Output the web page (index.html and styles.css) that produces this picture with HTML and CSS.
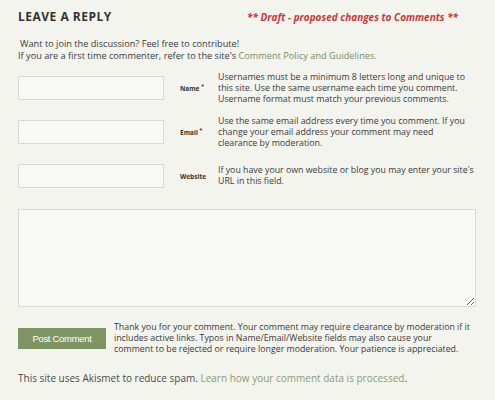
FILE: index.html
```html
<!DOCTYPE html>
<html lang="en">
<head>
    <meta charset="UTF-8">
    <title>Leave a Reply</title>
    <link rel="stylesheet" href="styles.css">
</head>
<body>
    <div class="reply">
        <div class="head">
            <h3>LEAVE A REPLY</h3>
            <span class="draft">** Draft - proposed changes to Comments **</span>
        </div>

        <p class="intro">
            <span class="first">Want to join the discussion? Feel free to contribute!</span><br>
            If you are a first time commenter, refer to the site's <a href="#">Comment Policy and Guidelines.</a>
        </p>

        <div class="field">
            <input type="text">
            <label>Name <sup>*</sup></label>
            <p>Usernames must be a minimum 8 letters long and unique to this site. Use the same username each time you comment. Username format must match your previous comments.</p>
        </div>
        <div class="field">
            <input type="text">
            <label>Email <sup>*</sup></label>
            <p>Use the same email address every time you comment. If you change your email address your comment may need clearance by moderation.</p>
        </div>
        <div class="field">
            <input type="text">
            <label>Website</label>
            <p>If you have your own website or blog you may enter your site's URL in this field.</p>
        </div>

        <textarea></textarea>

        <div class="submit">
            <button>Post Comment</button>
            <p>Thank you for your comment. Your comment may require clearance by moderation if it includes active links. Typos in Name/Email/Website fields may also cause your comment to be rejected or require longer moderation. Your patience is appreciated.</p>
        </div>

        <p class="akismet">This site uses Akismet to reduce spam. <a href="#">Learn how your comment data is processed</a>.</p>
    </div>
</body>
</html>
```

FILE: styles.css
```css
body {
    margin: 0;
    background: #f4f4ef;
    font-family: "Open Sans", sans-serif;
    color: #3a3a3a;
}
.reply {
    padding: 8px 19px 0 18px;
}
.head {
    display: flex;
    align-items: center;
    height: 17px;
}
.head h3 {
    margin: 0;
    font-size: 12px;
    font-weight: 700;
    letter-spacing: 0.5px;
    color: #333;
    width: 229px;
}
.draft {
    color: #d33535;
    font-style: italic;
    font-weight: 700;
    font-size: 10px;
}
.intro {
    margin: 13px 0 0 0;
    font-size: 9.2px;
    line-height: 12px;
}
.intro .first {
    padding-left: 2px;
}
a {
    color: #7b8c5a;
    text-decoration: none;
}
.field {
    display: grid;
    grid-template-columns: 146px 54px 256px;
    grid-template-rows: 24px;
    margin-top: 20px;
    align-items: center;
}
.intro + .field {
    margin-top: 14px;
}
.field input {
    height: 24px;
    box-sizing: border-box;
    border: 1px solid #d9d9d4;
    background: #f8f8f6;
    margin: 0;
}
.field label {
    font-size: 6.5px;
    font-weight: 700;
    padding-left: 16px;
    color: #333;
    white-space: nowrap;
}
.field sup {
    font-size: 5px;
}
.field p {
    margin: 0;
    font-size: 8.8px;
    line-height: 11px;
}
textarea {
    display: block;
    width: 458px;
    height: 98px;
    box-sizing: border-box;
    margin: 21px 0 0 0;
    border: 1px solid #d9d9d4;
    background: #f8f8f6;
}
.submit {
    display: grid;
    grid-template-columns: 88px 358px;
    grid-template-rows: 21px;
    column-gap: 8px;
    align-items: center;
    margin-top: 21px;
}
.submit button {
    height: 21px;
    background: #7f9463;
    color: #fff;
    border: none;
    font-family: "Liberation Sans", Arial, sans-serif;
    font-size: 9.5px;
    letter-spacing: -0.3px;
}
.submit p {
    margin: 0;
    font-size: 8.8px;
    line-height: 11px;
}
.akismet {
    margin: 22px 0 0 0;
    font-size: 10px;
    color: #4a4a4a;
}
.akismet a {
    color: #8c9a74;
}
```
